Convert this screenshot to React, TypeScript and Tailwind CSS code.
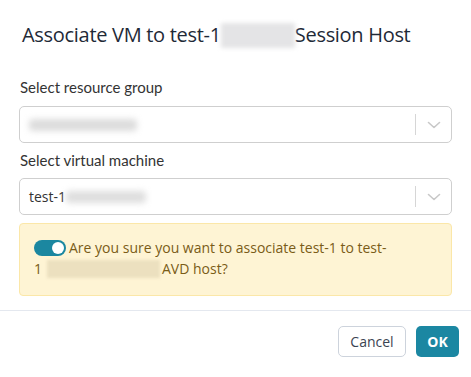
import React from "react";

function Chevron() {
  return (
    <svg width="14" height="8" viewBox="0 0 14 8" fill="none">
      <path d="M1.5 1.5 L7 6.5 L12.5 1.5" stroke="#c8c8c8" strokeWidth="1.6" strokeLinecap="round" strokeLinejoin="round" />
    </svg>
  );
}

function Blur({ w, h, color }: { w: number; h: number; color: string }) {
  return (
    <span
      className="inline-block blur-[3px] rounded-sm align-middle"
      style={{ width: w, height: h, backgroundColor: color }}
    />
  );
}

function SelectBox({ children }: { children: React.ReactNode }) {
  return (
    <div className="h-[37px] border border-[#cfcfcf] rounded-[5px] flex items-center bg-white">
      <div className="flex-1 pl-[9px] flex items-center text-[14px] text-[#333]">{children}</div>
      <div className="w-px h-[21px] bg-[#d6d6d6]" />
      <div className="w-[35px] flex items-center justify-center">
        <Chevron />
      </div>
    </div>
  );
}

export default function App() {
  return (
    <div className="w-[471px] h-[377px] bg-white relative" style={{ fontFamily: '"Open Sans", sans-serif' }}>
      <div className="pl-[22px] pt-[20px] h-[76px] text-[20px] text-[#1f2a37] font-medium tracking-[-0.3px] flex items-start">
        <span>Associate VM to test-1</span>
        <span className="w-[74px] h-[25px] mt-[3px] bg-[#e4e4e6] blur-[2px]" />
        <span>Session Host</span>
      </div>
      <div className="px-[19px]">
        <div className="text-[15px] text-[#333] h-[30px] pl-px" style={{ fontFamily: 'Lato, sans-serif' }}>Select resource group</div>
        <SelectBox>
          <Blur w={108} h={12} color="#dcdcdc" />
        </SelectBox>
        <div className="text-[15px] text-[#333] h-[35px] pt-[6px] pl-px" style={{ fontFamily: 'Lato, sans-serif' }}>Select virtual machine</div>
        <SelectBox>
          <span>test-1</span>
          <Blur w={80} h={12} color="#dedede" />
        </SelectBox>
        <div className="mt-[8px] h-[73px] bg-[#fef4d4] border border-[#fbe7a8] rounded-[4px] pl-[14px] pt-[13px] text-[14px] leading-[21px] text-[#7a5c18]">
          <div className="flex items-center">
            <span className="w-[32px] h-[16px] rounded-full bg-[#1b87a0] relative inline-block mr-[3px]">
              <span className="absolute right-[2px] top-[2px] w-[12px] h-[12px] rounded-full bg-white" />
            </span>
            <span>Are you sure you want to associate test-1 to test-</span>
          </div>
          <div className="flex items-center">
            <span>1</span>
            <span className="inline-block w-[113px] h-[18px] ml-[5px] bg-[#ece0bf] blur-[1.5px]" />
            <span className="ml-[2px]">AVD host?</span>
          </div>
        </div>
      </div>
      <div className="mt-[14px] border-t border-[#e4e8ef]" />
      <div className="flex justify-end gap-[10px] pr-[12px] pt-[15px]">
        <button className="w-[68px] h-[31px] border border-[#cdd3dc] rounded-[5px] text-[14px] text-[#3b4452] bg-white">Cancel</button>
        <button className="w-[43px] h-[31px] rounded-[5px] text-[14px] font-bold text-white bg-[#1b87a2]">OK</button>
      </div>
    </div>
  );
}
